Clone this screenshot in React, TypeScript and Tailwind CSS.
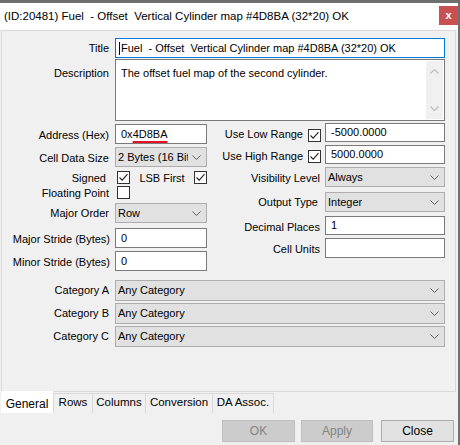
import React from 'react';

const Chevron = ({ color = '#606060' }: { color?: string }) => (
  <svg width="9" height="5" viewBox="0 0 9 5" className="shrink-0">
    <path d="M0.5 0.5 L4.5 4.5 L8.5 0.5" fill="none" stroke={color} strokeWidth="1" />
  </svg>
);

const Check = ({ checked }: { checked?: boolean }) => (
  <div className="flex h-[13px] w-[13px] shrink-0 items-center justify-center border border-[#333333] bg-white">
    {checked && (
      <svg width="11" height="11" viewBox="0 0 11 11">
        <path d="M1.5 5.5 L4.2 8.2 L9.5 2.2" fill="none" stroke="#222222" strokeWidth="1.1" />
      </svg>
    )}
  </div>
);

const TextBox = ({ w, h = 20, children }: { w: number; h?: number; children?: React.ReactNode }) => (
  <div
    className="flex shrink-0 items-center overflow-hidden whitespace-nowrap border border-[#7a7a7a] bg-white pl-[5px]"
    style={{ width: w, height: h }}
  >
    {children}
  </div>
);

const Combo = ({ w, h = 20, value, clip }: { w: number; h?: number; value: string; clip?: number }) => (
  <div
    className="flex shrink-0 items-center justify-between border border-[#adadad] bg-[#e1e1e1] pl-[2px] pr-[5px]"
    style={{ width: w, height: h }}
  >
    <span className="overflow-hidden whitespace-nowrap" style={clip ? { width: clip } : undefined}>
      {value}
    </span>
    <Chevron />
  </div>
);

const Label = ({ w, children, className = '' }: { w: number; children: React.ReactNode; className?: string }) => (
  <div className={`shrink-0 whitespace-nowrap text-right ${className}`} style={{ width: w }}>
    {children}
  </div>
);

export default function App() {
  const tabs = [
    { name: 'Rows', w: 40 },
    { name: 'Columns', w: 53 },
    { name: 'Conversion', w: 67 },
    { name: 'DA Assoc.', w: 61 },
  ];

  return (
    <div className="flex h-[445px] w-[460px] flex-col overflow-hidden border-t-[3px] border-r-[2px] border-[#707070] bg-[#f0f0f0] font-['Liberation_Sans',Arial,sans-serif] text-[11px] text-black">
      {/* title bar */}
      <div className="flex h-[27px] shrink-0 items-start justify-between bg-white">
        <div className="mt-[6px] ml-[4px] whitespace-nowrap text-[11.5px] leading-[15px]">
          (ID:20481) Fuel&nbsp; - Offset&nbsp; Vertical Cylinder map #4D8BA (32*20) OK
        </div>
        <div className="mt-[3px] flex h-[19px] w-[19px] items-center justify-center bg-[#c75050] text-[11px] font-bold leading-none text-white">
          x
        </div>
      </div>

      {/* tab page */}
      <div className="ml-[1px] flex h-[362px] w-[455px] shrink-0 flex-col border border-[#d9d9d9] bg-[#f0f0f0] pt-[7px]">
        <div className="flex h-[20px] items-center">
          <Label w={107}>Title</Label>
          <div className="ml-[6px] flex h-[20px] w-[330px] items-center whitespace-nowrap border border-[#0078d7] bg-white pl-[3px]">
            <span className="mr-[1px] inline-block h-[13px] w-px bg-black" />
            Fuel&nbsp; - Offset&nbsp; Vertical Cylinder map #4D8BA (32*20) OK
          </div>
        </div>

        <div className="mt-[1px] flex items-start">
          <Label w={107} className="pt-[6px]">
            Description
          </Label>
          <div className="ml-[6px] flex h-[62px] w-[330px] border border-[#7a7a7a] bg-white">
            <div className="flex-1 pl-[5px] pt-[5px]">The offset fuel map of the second cylinder.</div>
            <div className="my-px mr-px flex w-[17px] flex-col items-center justify-between bg-[#f0f0f0] py-[8px]">
              <svg width="9" height="5" viewBox="0 0 9 5">
                <path d="M0.5 4.5 L4.5 0.5 L8.5 4.5" fill="none" stroke="#bdbdbd" strokeWidth="1.2" />
              </svg>
              <svg width="9" height="5" viewBox="0 0 9 5">
                <path d="M0.5 0.5 L4.5 4.5 L8.5 0.5" fill="none" stroke="#bdbdbd" strokeWidth="1.2" />
              </svg>
            </div>
          </div>
        </div>

        {/* two columns */}
        <div className="mt-[2px] flex items-start">
          {/* left */}
          <div className="flex flex-col pt-[1px]">
            <div className="flex h-[20px] items-center">
              <Label w={107} className="pt-[3px]">Address (Hex)</Label>
              <div className="ml-[6px]">
                <TextBox w={92}>
                  0x
                  <span className="underline decoration-[#e81123] decoration-[1.5px] underline-offset-[3px]">4D8BA</span>
                </TextBox>
              </div>
            </div>
            <div className="mt-[3px] flex h-[20px] items-center">
              <Label w={107} className="pt-[3px]">Cell Data Size</Label>
              <div className="ml-[6px]">
                <Combo w={92} value="2 Bytes (16 Bits)" clip={70} />
              </div>
            </div>
            <div className="mt-[4px] flex h-[13px] items-center">
              <Label w={107} className="pr-[3px] pt-[2px]">Signed</Label>
              <div className="ml-[6px] flex w-[92px] items-center pl-[2px]">
                <Check checked />
                <span className="flex-1 pt-[2px] text-center">LSB First</span>
                <Check checked />
              </div>
            </div>
            <div className="mt-[2px] flex h-[13px] items-center">
              <Label w={107} className="pt-[1px]">Floating Point</Label>
              <div className="ml-[8px]">
                <Check />
              </div>
            </div>
            <div className="mt-[4px] flex h-[20px] items-center">
              <Label w={107}>Major Order</Label>
              <div className="ml-[6px]">
                <Combo w={92} value="Row" />
              </div>
            </div>
            <div className="mt-[5px] flex h-[20px] items-center">
              <Label w={108} className="pt-[3px]">Major Stride (Bytes)</Label>
              <div className="ml-[5px]">
                <TextBox w={92}>0</TextBox>
              </div>
            </div>
            <div className="mt-[3px] flex h-[20px] items-center">
              <Label w={108} className="pt-[3px]">Minor Stride (Bytes)</Label>
              <div className="ml-[5px]">
                <TextBox w={92}>0</TextBox>
              </div>
            </div>
          </div>

          {/* right */}
          <div className="ml-[13px] flex flex-col">
            <div className="flex h-[19px] items-center">
              <Label w={83} className="pt-[3px]">Use Low Range</Label>
              <div className="ml-[5px] pt-[5px]">
                <Check checked />
              </div>
              <div className="ml-[4px]">
                <TextBox w={120} h={19}>-5000.0000</TextBox>
              </div>
            </div>
            <div className="mt-[3px] flex h-[19px] items-center">
              <Label w={83} className="pt-[3px]">Use High Range</Label>
              <div className="ml-[5px] pt-[3px]">
                <Check checked />
              </div>
              <div className="ml-[4px]">
                <TextBox w={120} h={19}>5000.0000</TextBox>
              </div>
            </div>
            <div className="mt-[3px] flex h-[20px] items-center">
              <Label w={100} className="pt-[3px]">Visibility Level</Label>
              <div className="ml-[5px]">
                <Combo w={120} value="Always" />
              </div>
            </div>
            <div className="mt-[5px] flex h-[20px] items-center">
              <Label w={98}>Output Type</Label>
              <div className="ml-[7px]">
                <Combo w={120} value="Integer" />
              </div>
            </div>
            <div className="mt-[4px] flex h-[19px] items-center">
              <Label w={100} className="pt-[3px]">Decimal Places</Label>
              <div className="ml-[5px]">
                <TextBox w={120} h={19}>1</TextBox>
              </div>
            </div>
            <div className="mt-[3px] flex h-[20px] items-center">
              <Label w={100} className="pt-[3px]">Cell Units</Label>
              <div className="ml-[5px]">
                <TextBox w={120} />
              </div>
            </div>
          </div>
        </div>

        {/* categories */}
        <div className="mt-[9px] flex h-[21px] items-center">
          <Label w={107}>Category A</Label>
          <div className="ml-[6px]">
            <Combo w={330} h={21} value="Any Category" />
          </div>
        </div>
        <div className="mt-[2px] flex h-[21px] items-center">
          <Label w={107}>Category B</Label>
          <div className="ml-[6px]">
            <Combo w={330} h={21} value="Any Category" />
          </div>
        </div>
        <div className="mt-[2px] flex h-[21px] items-center">
          <Label w={107}>Category C</Label>
          <div className="ml-[6px]">
            <Combo w={330} h={21} value="Any Category" />
          </div>
        </div>
      </div>

      {/* tabs */}
      <div className="-mt-px ml-[1px] flex shrink-0 items-start">
        <div className="flex h-[22px] w-[52px] items-center justify-center bg-white pt-[3px] text-[12px]">General</div>
        {tabs.map((t, i) => (
          <div
            key={t.name}
            className={`mt-[2px] flex h-[20px] items-center justify-center border-t border-r border-[#d9d9d9] bg-[#f0f0f0] pb-px text-[11.5px] ${i === 0 ? 'border-l' : ''}`}
            style={{ width: t.w }}
          >
            {t.name}
          </div>
        ))}
      </div>

      {/* buttons */}
      <div className="mt-[7px] flex shrink-0 justify-end pr-[4px] text-[12px]">
        <div className="flex h-[22px] w-[73px] items-center justify-center border border-[#bfbfbf] bg-[#cccccc] text-[#838383]">
          OK
        </div>
        <div className="ml-[6px] flex h-[22px] w-[72px] items-center justify-center border border-[#bfbfbf] bg-[#cccccc] text-[#838383]">
          Apply
        </div>
        <div className="ml-[8px] flex h-[22px] w-[73px] items-center justify-center border border-[#adadad] bg-[#e1e1e1]">
          Close
        </div>
      </div>
    </div>
  );
}
